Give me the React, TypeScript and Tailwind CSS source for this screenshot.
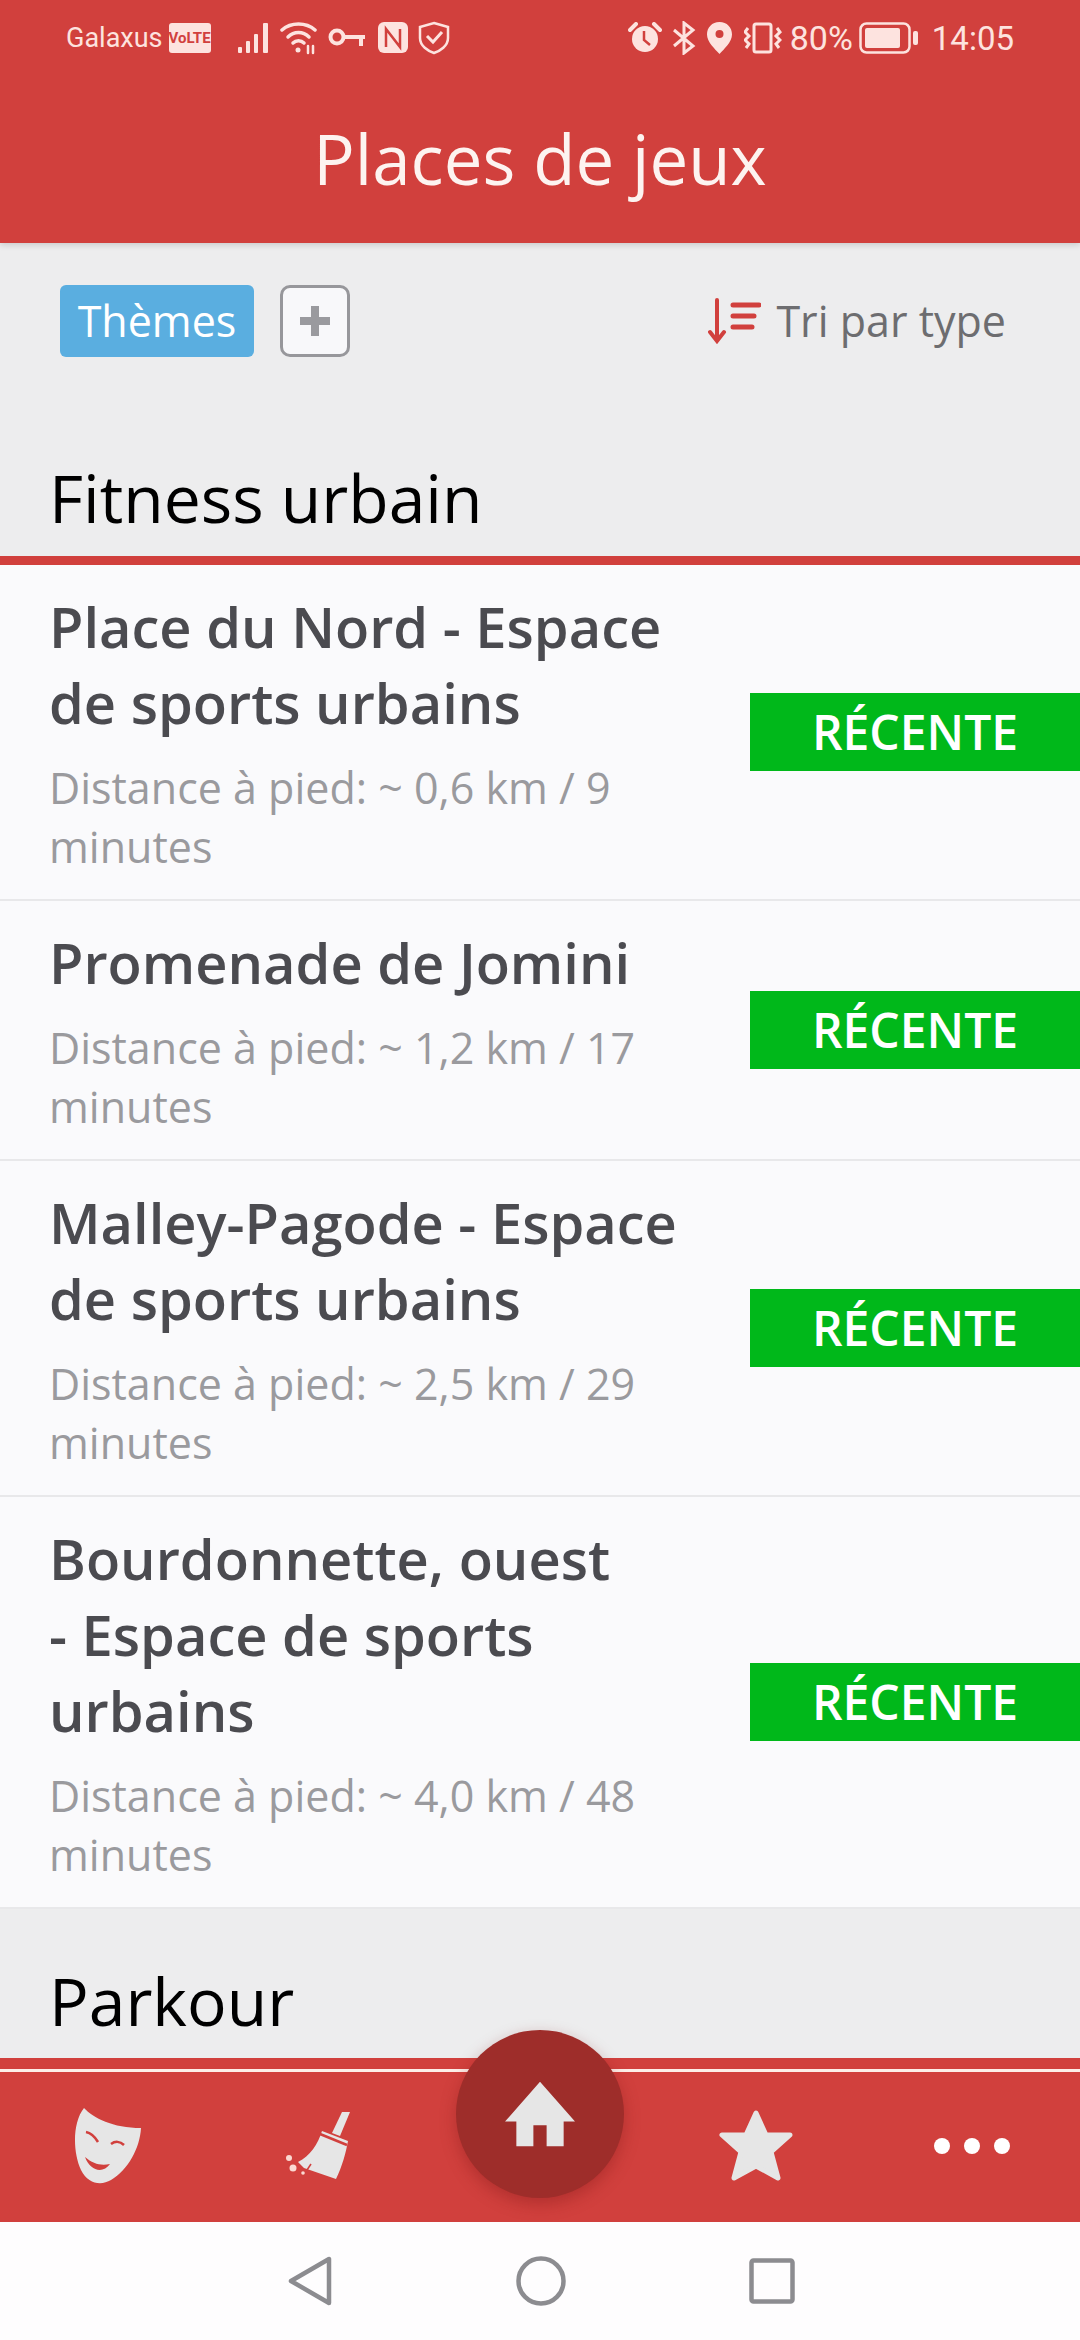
import React from 'react'

const places = [
  { title: ['Place du Nord - Espace', 'de sports urbains'], distance: '0,6 km / 9' },
  { title: ['Promenade de Jomini'], distance: '1,2 km / 17' },
  { title: ['Malley-Pagode - Espace', 'de sports urbains'], distance: '2,5 km / 29' },
  { title: ['Bourdonnette, ouest', '- Espace de sports', 'urbains'], distance: '4,0 km / 48' },
]

function StatusBar() {
  return (
    <div className="flex h-[76px] items-center pl-[66px] pr-[66px] text-[#fde3df]">
      <span className="font-['Roboto',sans-serif] text-[27px] leading-none">Galaxus</span>
      <span className="ml-[6px] flex h-[30px] w-[42px] items-center justify-center rounded-[3px] bg-[#fde3df] font-['Roboto',sans-serif] text-[15px] font-bold leading-none text-[#d1403d]">VoLTE</span>
      <svg className="ml-[26px]" width="34" height="32" viewBox="0 0 34 32" fill="currentColor">
        <rect x="1" y="25" width="4" height="6" rx="1" />
        <rect x="9" y="19" width="4" height="12" rx="1" />
        <rect x="17" y="12" width="4" height="19" rx="1" />
        <rect x="26" y="1" width="5" height="30" rx="1" />
      </svg>
      <svg className="ml-[9px]" width="38" height="34" viewBox="0 0 38 34" fill="none" stroke="currentColor" strokeWidth="3.5" strokeLinecap="round">
        <path d="M2 9 C11 1 26 1 35 9" />
        <path d="M8 16 C14 10 23 10 29 16" />
        <path d="M13 22 C16 19 21 19 24 22" />
        <circle cx="18" cy="29" r="2.5" fill="currentColor" stroke="none" />
        <path d="M28 25 V32 M33 25 V32" strokeWidth="2.5" />
      </svg>
      <svg className="ml-[10px]" width="38" height="22" viewBox="0 0 38 22" fill="none" stroke="currentColor" strokeWidth="4">
        <circle cx="9" cy="10" r="6.5" />
        <path d="M16 10 H37 M33 10 V19" />
      </svg>
      <svg className="ml-[12px]" width="30" height="32" viewBox="0 0 30 32">
        <rect width="30" height="31" rx="6" fill="currentColor" />
        <path d="M8 25 V7 L22 25 V7" fill="none" stroke="#d1403d" strokeWidth="2.5" />
      </svg>
      <svg className="ml-[10px]" width="32" height="34" viewBox="0 0 32 34" fill="none" stroke="currentColor" strokeWidth="2.5">
        <path d="M16 2 L30 6 V17 C30 25 22 30 16 32 C10 30 2 25 2 17 V6 Z" />
        <path d="M9 15 L15 21 L24 11" strokeWidth="3" />
      </svg>
      <div className="flex-1" />
      <svg width="34" height="32" viewBox="0 0 34 32" fill="currentColor">
        <circle cx="17" cy="17" r="13" />
        <path d="M2 8 L8 2 M32 8 L26 2" stroke="currentColor" strokeWidth="4" strokeLinecap="round" />
        <path d="M16 9 V18 L22 23" fill="none" stroke="#d1403d" strokeWidth="2.5" />
      </svg>
      <svg className="ml-[10px]" width="25" height="34" viewBox="0 0 25 34" fill="none" stroke="currentColor" strokeWidth="3">
        <path d="M2 9 L21 25 L12 32 V2 L21 9 L2 25" />
      </svg>
      <svg className="ml-[10px]" width="25" height="32" viewBox="0 0 25 32">
        <path d="M12.5 0 C20 0 25 5.500 25 12.500 C25 20 17 27 12.500 32 C8 27 0 20 0 12.500 C0 5.500 5 0 12.500 0 Z" fill="currentColor" />
        <circle cx="12.500" cy="12" r="4" fill="#d1403d" />
      </svg>
      <svg className="ml-[12px]" width="38" height="32" viewBox="0 0 38 32" fill="none" stroke="currentColor" strokeWidth="3">
        <rect x="10" y="2" width="17" height="28" rx="2" />
        <path d="M4 6 L1 10 L5 14 L1 18 L5 22 L2 26 M33 6 L36 10 L32 14 L36 18 L32 22 L35 26" />
      </svg>
      <span className="ml-[8px] font-['Roboto',sans-serif] text-[34px] leading-none">80%</span>
      <svg className="ml-[6px]" width="59" height="32" viewBox="0 0 59 32" fill="none" stroke="currentColor">
        <rect x="1.500" y="1.500" width="49" height="29" rx="6" strokeWidth="2.500" />
        <rect x="6" y="6" width="35" height="20" rx="2" fill="currentColor" stroke="none" />
        <rect x="54" y="9" width="5" height="14" rx="2" fill="currentColor" stroke="none" />
      </svg>
      <span className="ml-[14px] font-['Roboto',sans-serif] text-[33px] leading-none">14:05</span>
    </div>
  )
}

function SectionHead({ label, last = false }: { label: string; last?: boolean }) {
  return (
    <div className={`flex items-end border-b-[9px] border-[#d1403d] px-[49px] ${last ? 'h-[158px] pb-[14px]' : 'h-[163px] pb-[15px]'}`}>
      <h2 className="text-[66px] leading-[87px] text-black">{label}</h2>
    </div>
  )
}

function PlaceRow({ title, distance }: { title: string[]; distance: string }) {
  return (
    <div className="flex items-center border-b-2 border-[#e8e8ea] bg-[#fafafc] py-[23px]">
      <div className="w-[750px] pl-[49px] pr-[40px]">
        <div className="text-[56px] font-semibold leading-[76px] text-[#4b4b50]">
          {title.map(line => (
            <div key={line}>{line}</div>
          ))}
        </div>
        <p className="mt-[19px] w-[640px] text-[43px] leading-[58.500px] text-[#9a9a9e]">
          Distance à pied: ~ {distance} minutes
        </p>
      </div>
      <div className="flex h-[78px] w-[330px] items-center justify-center bg-[#00b81a] text-[48px] font-semibold text-white">
        RÉCENTE
      </div>
    </div>
  )
}

function BottomBar() {
  return (
    <div className="relative border-t-[9px] border-[#d1403d] bg-[#d1403d]">
      <div className="h-[3px] bg-[#fdeee8]" />
      <div className="grid h-[150px] grid-cols-5 items-center bg-[#d1403d] pb-[2px]">
        <div className="flex justify-center">
          <svg className="mr-[2px]" width="68" height="76" viewBox="0 0 68 76">
            <path d="M11 0 C20 10 40 20 68 20 C67 40 55 62 38 72 C28 78 15 76 8 62 C0 45 -1 15 11 0 Z" fill="#e6e6e6" />
            <path d="M13 24 C18 25 22 29 25 34 M38 36 C42 33 47 33 51 37" fill="none" stroke="#d1403d" strokeWidth="2.500" />
            <path d="M12 49 C20 56 28 58 37 56 C30 66 17 63 12 49 Z" fill="#d1403d" />
          </svg>
        </div>
        <div className="flex justify-center">
          <svg className="mr-[12px]" width="65" height="68" viewBox="0 0 65 68">
            <path d="M56 0 H64 L54 24 L46 21 Z" fill="#e6e6e6" />
            <path d="M36 19 L62 29 C60 40 56 55 50 67 L18 56 L12 50 C24 44 32 32 36 19 Z" fill="#e6e6e6" />
            <path d="M34 22 L61 33" stroke="#d1403d" strokeWidth="2.500" />
            <path d="M25 52 L21 58" stroke="#d1403d" strokeWidth="1.500" />
            <circle cx="3" cy="46" r="3" fill="#fbd9d2" />
            <circle cx="7" cy="56" r="3.500" fill="#fbd9d2" />
            <circle cx="17" cy="61" r="1.800" fill="#fbd9d2" />
          </svg>
        </div>
        <div />
        <div className="flex justify-center">
          <svg width="76" height="72" viewBox="0 0 76 72">
            <path d="M38 3 L48 25 L72 25 L53 42 L60 68 L38 56 L16 68 L23 42 L4 25 L28 25 Z" fill="#e6e6e6" stroke="#e6e6e6" strokeWidth="5" strokeLinejoin="round" />
          </svg>
        </div>
        <div className="flex justify-center gap-[14px]">
          <span className="h-[16px] w-[16px] rounded-full bg-white" />
          <span className="h-[16px] w-[16px] rounded-full bg-white" />
          <span className="h-[16px] w-[16px] rounded-full bg-white" />
        </div>
      </div>
      {/* home button sits over the bar */}
      <div className="absolute left-[456px] top-[-39px] flex h-[168px] w-[168px] items-center justify-center rounded-full bg-[#9e2d2a] shadow-[0_6px_16px_rgba(120,20,20,0.35)]">
        <svg width="70" height="68" viewBox="0 0 74 68">
          <path d="M37 0 L74 42 H62 V68 H44 V46 H30 V68 H12 V42 H0 Z" fill="#e6e6e6" />
        </svg>
      </div>
    </div>
  )
}

export default function App() {
  return (
    <div className="flex h-[2340px] w-[1080px] flex-col overflow-hidden bg-white font-['Open_Sans',sans-serif]">
      <header className="z-10 h-[243px] bg-[#d1403d] shadow-[0_2px_6px_rgba(0,0,0,0.15)]">
        <StatusBar />
        <h1 className="mt-[39px] text-center text-[69px] leading-[87px] text-[#fdf3f0]">Places de jeux</h1>
      </header>

      <main className="min-h-0 flex-1 overflow-hidden bg-[#ededee]">
        <div className="box-content flex h-[117px] items-start justify-between pl-[60px] pr-[74px] pt-[42px]">
          <div className="flex gap-[26px]">
            <button className="flex h-[72px] w-[194px] items-center justify-center rounded-[6px] bg-[#5aaee0] text-[43px] text-white">
              Thèmes
            </button>
            <button className="flex h-[72px] w-[70px] items-center justify-center rounded-[10px] border-[3px] border-[#97979b] bg-[#f8f8fa]">
              <svg width="30" height="30" viewBox="0 0 30 30" fill="#9a9a9e">
                <path d="M11 0 H19 V11 H30 V19 H19 V30 H11 V19 H0 V11 H11 Z" />
              </svg>
            </button>
          </div>
          <div className="flex h-[72px] items-center gap-[15px]">
            <svg width="53" height="46" viewBox="0 0 53 46" fill="none" stroke="#d1403d" strokeLinecap="round">
              <path d="M9 2 V42 M2 34 L9 43 L16 34" strokeWidth="4" />
              <path d="M25 7 H51 M25 18 H46 M25 29 H44" strokeWidth="5" />
            </svg>
            <span className="text-[43px] text-[#6d6d70]">Tri par type</span>
          </div>
        </div>

        <SectionHead label="Fitness urbain" />
        {places.map(place => (
          <PlaceRow key={place.distance} title={place.title} distance={place.distance} />
        ))}
        <SectionHead label="Parkour" last />
      </main>

      <BottomBar />

      <nav className="flex h-[118px] items-center bg-[#fefdfe]">
        <div className="flex w-full items-center pl-[288px]">
          <svg width="44" height="50" viewBox="0 0 44 50" fill="none" stroke="#8c8c90" strokeWidth="4.500" strokeLinejoin="round">
            <path d="M41 3 V47 L3 25 Z" />
          </svg>
          <svg className="ml-[184px]" width="50" height="50" viewBox="0 0 50 50" fill="none" stroke="#8c8c90" strokeWidth="4.500">
            <circle cx="25" cy="25" r="22.500" />
          </svg>
          <svg className="ml-[183px]" width="46" height="46" viewBox="0 0 46 46" fill="none" stroke="#8c8c90" strokeWidth="4.500" strokeLinejoin="round">
            <rect x="2.500" y="2.500" width="41" height="41" rx="2" />
          </svg>
        </div>
      </nav>
    </div>
  )
}
